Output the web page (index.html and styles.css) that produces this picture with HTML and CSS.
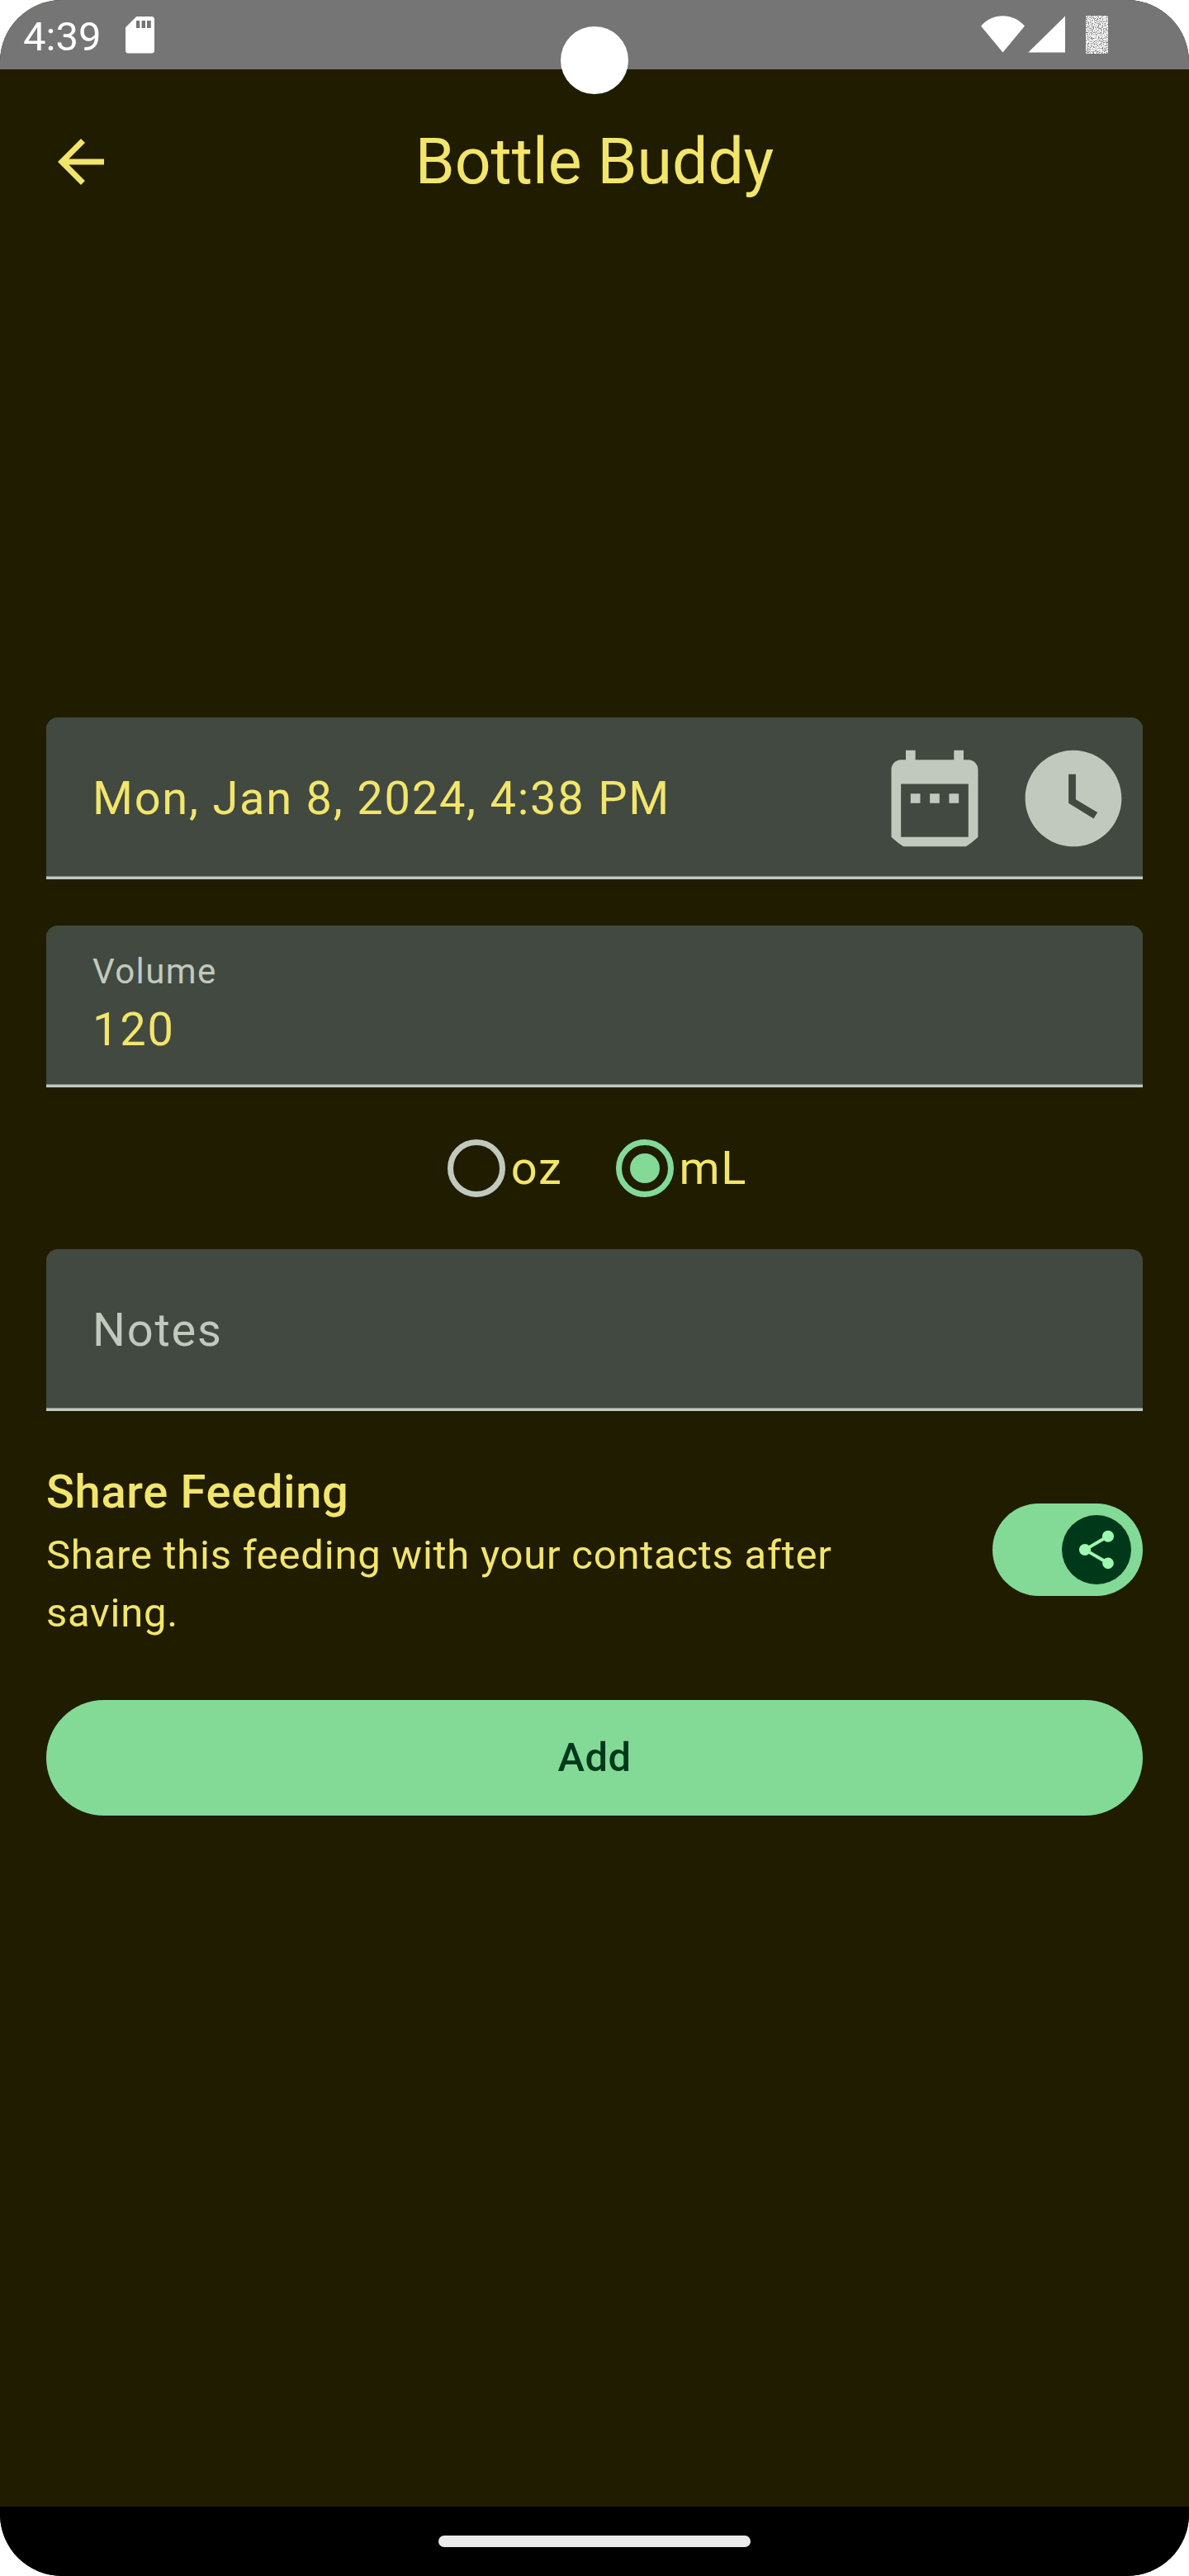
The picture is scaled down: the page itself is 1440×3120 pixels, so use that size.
FILE: index.html
```html
<!DOCTYPE html>
<html lang="en">
<head>
<meta charset="utf-8">
<title>Bottle Buddy</title>
<link rel="stylesheet" href="styles.css">
</head>
<body>
<div class="screen">
  <header class="status-bar">
    <span class="clock">4:39</span>
    <svg class="sd-icon" width="35" height="45" viewBox="0 0 35 45"><path fill="#fff" fill-rule="evenodd" d="M13.300 0H31.500Q35 0 35 3.500V41Q35 44.500 31.500 44.500H3.500Q0 44.500 0 41V13.300ZM13 5V14H17.200V5ZM19.600 5V14H24V5ZM26 5V14H30.800V5Z"/></svg>
    <svg class="signal-icons" width="102" height="46" viewBox="0 0 102 46">
      <path fill="#fff" d="M0 12.500C14-4 39-4 53 12.500L26.500 44.500ZM57.300 44.500 102 .500V44.500Z"/>
    </svg>
    <svg class="battery-icon" width="27" height="46" viewBox="0 0 27 46">
      <filter id="grain" x="0" y="0" width="1" height="1" color-interpolation-filters="sRGB">
        <feTurbulence type="fractalNoise" baseFrequency=".83" numOctaves="2" seed="4"/>
        <feColorMatrix values="0 0 0 0 1  0 0 0 0 1  0 0 0 0 1  4 0 0 0 -1.250"/>
      </filter>
      <rect width="27" height="46" filter="url(#grain)"/>
    </svg>
    <div class="camera"></div>
  </header>

  <div class="app-bar">
    <svg class="back" width="84" height="84" viewBox="0 0 24 24"><path fill="currentColor" d="M20 11H7.830l5.590-5.590L12 4l-8 8 8 8 1.410-1.410L7.830 13H20z"/></svg>
    <h1 class="title">Bottle Buddy</h1>
  </div>

  <main class="form">
    <div class="field field-date">
      <span class="value">Mon, Jan 8, 2024, 4:38 PM</span>
      <svg class="field-icon" width="140" height="140" viewBox="0 0 24 24"><path fill="currentColor" fill-rule="evenodd" d="M9 11H7v2h2zM13 11h-2v2h2zM17 11h-2v2h2zM19 4h-1V2h-2v2H8V2H6v2H5C3.900 4 3 4.900 3 6V20Q4 21 5.500 22H18.500Q20 21 21 20V6c0-1.100-.900-2-2-2zM19 20H5V9h14z"/></svg>
      <svg class="field-icon" width="140" height="140" viewBox="0 0 24 24"><path fill="currentColor" d="M12 2C6.500 2 2 6.500 2 12s4.500 10 10 10 10-4.500 10-10S17.500 2 12 2zm4.200 14.200L11 13V7h1.500v5.200l4.500 2.700-.800 1.300z"/></svg>
    </div>

    <div class="field field-volume">
      <span class="label">Volume</span>
      <span class="value">120</span>
    </div>

    <div class="units">
      <div class="unit"><span class="radio"></span>oz</div>
      <div class="unit"><span class="radio radio-on"></span>mL</div>
    </div>

    <div class="field"><span class="placeholder">Notes</span></div>

    <div class="share">
      <div class="share-text">
        <h2 class="share-title">Share Feeding</h2>
        <p class="share-body">Share this feeding with your contacts after saving.</p>
      </div>
      <div class="switch">
        <div class="thumb">
          <svg width="56" height="56" viewBox="0 0 24 24"><path fill="currentColor" d="M18 16.080c-.760 0-1.440.300-1.960.770L8.910 12.700c.050-.230.090-.460.090-.700s-.040-.470-.090-.700l7.050-4.110c.540.500 1.250.810 2.040.810 1.660 0 3-1.340 3-3s-1.340-3-3-3-3 1.340-3 3c0 .240.040.470.090.700L8.040 9.810C7.500 9.310 6.790 9 6 9c-1.660 0-3 1.340-3 3s1.340 3 3 3c.790 0 1.500-.310 2.040-.810l7.120 4.160c-.050.210-.080.430-.080.650 0 1.610 1.310 2.920 2.920 2.920s2.920-1.310 2.920-2.920-1.310-2.920-2.920-2.920z"/></svg>
        </div>
      </div>
    </div>

    <button class="add" type="button">Add</button>
  </main>

  <footer class="nav-bar"><div class="handle"></div></footer>
</div>
</body>
</html>
```
FILE: styles.css
```css
* { box-sizing: border-box; }

body {
  margin: 0;
  background: #fff;
  font-family: Roboto, sans-serif;
}

svg { display: block; flex: none; }
h1, h2, p { margin: 0; }

.screen {
  display: flex;
  flex-direction: column;
  width: 1440px;
  height: 3120px;
  overflow: hidden;
  border-radius: 75px;
  background: #201c00;
  color: #f2e56b;
}

.status-bar {
  position: relative;
  display: flex;
  align-items: flex-start;
  height: 84px;
  padding: 0 98px 0 28px;
  background: #757575;
  color: #fff;
}

.clock { width: 124px; font-size: 49px; line-height: 89px; }
.sd-icon { margin-top: 20px; }
.signal-icons { margin: 19px 25px 0 auto; }
.battery-icon { margin-top: 19px; }

.camera {
  position: absolute;
  top: 32px;
  left: 679px;
  width: 82px;
  height: 82px;
  border-radius: 50%;
  background: #fff;
}

.app-bar {
  display: grid;
  grid-template-columns: 84px 1fr 84px;
  align-items: center;
  height: 224px;
  padding: 0 56px;
}

.title {
  font-size: 77px;
  font-weight: 400;
  line-height: 98px;
  text-align: center;
}

.form {
  display: flex;
  flex: 1;
  flex-direction: column;
  padding: 561px 56px 0;
}

.field {
  display: flex;
  flex: none;
  align-items: center;
  height: 196px;
  padding: 3px 14px 0 56px;
  border-bottom: 3px solid #c1c9bf;
  border-radius: 14px 14px 0 0;
  background: #424940;
  box-shadow: inset 0 -1px #82897f;
  color: #c1c9bf;
  font-size: 56px;
  line-height: 84px;
  letter-spacing: 1.75px;
}

.field-date { margin-bottom: 56px; }
.field-icon + .field-icon { margin-left: 28px; }

.value { flex: 1; color: #f2e56b; }

.field-volume {
  flex-direction: column;
  align-items: stretch;
  padding-top: 28px;
}
.field-volume .value { flex: none; }

.label { font-size: 42px; line-height: 56px; letter-spacing: 1.4px; }

.units {
  display: flex;
  justify-content: center;
  gap: 57px;
  height: 196px;
}

.unit {
  display: flex;
  align-items: center;
  font-size: 56px;
  line-height: 84px;
  letter-spacing: 1.75px;
}

.radio {
  width: 70px;
  height: 70px;
  margin: 0 7px;
  border: 7px solid #c1c9bf;
  border-radius: 50%;
}

.radio-on {
  display: grid;
  place-items: center;
  border-color: #83da97;
}

.radio-on::before {
  content: "";
  width: 36px;
  height: 36px;
  border-radius: 50%;
  background: #83da97;
}

.share {
  display: flex;
  align-items: center;
  justify-content: space-between;
  margin: 56px 0 70px;
}

.share-text { width: 1090px; }

.share-title {
  font-size: 56px;
  font-weight: 500;
  line-height: 84px;
  letter-spacing: 0.7px;
}

.share-body {
  font-size: 49px;
  line-height: 70px;
  letter-spacing: 0.75px;
}

.switch {
  display: flex;
  justify-content: flex-end;
  width: 182px;
  height: 112px;
  padding: 14px;
  border-radius: 56px;
  background: #83da97;
}

.thumb {
  display: grid;
  place-items: center;
  width: 84px;
  height: 84px;
  border-radius: 50%;
  background: #00391a;
  color: #9ef7b2;
}

.add {
  height: 140px;
  padding: 0;
  border: 0;
  border-radius: 70px;
  background: #83da97;
  color: #00391a;
  font: 500 49px/70px Roboto, sans-serif;
  letter-spacing: 0.35px;
}

.nav-bar {
  display: flex;
  justify-content: center;
  height: 84px;
  padding-top: 35px;
  background: #000;
}

.handle {
  width: 378px;
  height: 14px;
  border-radius: 7px;
  background: #ebebeb;
}
```
